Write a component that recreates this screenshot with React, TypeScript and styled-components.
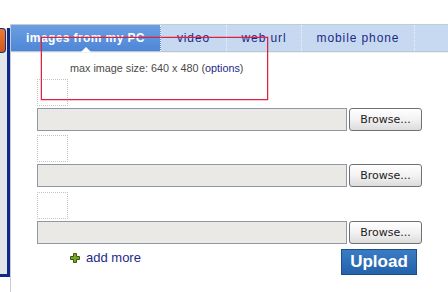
import React from "react";
import styled, { createGlobalStyle } from "styled-components";

const GlobalStyle = createGlobalStyle`
  html, body { margin: 0; padding: 0; background: #ffffff; }
  body { width: 448px; height: 292px; overflow: hidden; font-family: "Liberation Sans", Arial, sans-serif; }
`;

const Page = styled.div`
  display: flex;
  align-items: flex-start;
  width: 448px;
  height: 292px;
`;

const SidePanel = styled.div`
  display: flex;
  flex-direction: column;
  width: 7px;
  height: 246px;
  margin-top: 28px;
  background: #e1e6ea;
  border-right: 3px solid #0d2a86;
  border-bottom: 3px solid #0d2a86;
  box-shadow: 1px 0 0 #a8b6ea;
  flex-shrink: 0;
`;

const SideButton = styled.div`
  width: 6px;
  height: 23px;
  margin-left: -1px;
  background: linear-gradient(#f07a30, #d4561a);
  border: 1px solid #13307e;
  border-left: none;
  border-radius: 0 4px 4px 0;
`;

const Frame = styled.div`
  position: relative;
  flex: 1;
  margin-top: 24px;
  height: 268px;
  border-top: 1px solid #c3ccd6;
  border-left: 1px solid #c3ccd6;
`;

const TabBar = styled.div`
  display: flex;
  height: 26px;
  background: #c7d9f1;
  border-bottom: 1px solid #b9c6d4;
  box-shadow: 0 1px 0 #eef2f6;
`;

const Tab = styled.div<{ $w: number; $active?: boolean }>`
  position: relative;
  width: ${(p) => p.$w}px;
  display: flex;
  align-items: center;
  justify-content: center;
  font-size: 12px;
  letter-spacing: ${(p) => (p.$active ? "0.4px" : "0.9px")};
  font-weight: ${(p) => (p.$active ? "bold" : "normal")};
  color: ${(p) => (p.$active ? "#ffffff" : "#1c2a86")};
  background: ${(p) =>
    p.$active ? "linear-gradient(#6a9fe2, #4f86d6)" : "transparent"};
  border-right: 1px dotted #f0f4fa;
  box-sizing: border-box;
  white-space: nowrap;
`;

const Pointer = styled.span`
  position: absolute;
  left: 70px;
  bottom: -1px;
  width: 0;
  height: 0;
  border-left: 5px solid transparent;
  border-right: 5px solid transparent;
  border-bottom: 5px solid #ffffff;
`;

const Content = styled.div`
  display: flex;
  flex-direction: column;
  width: 385px;
  padding-left: 26px;
`;

const Info = styled.div`
  margin: 9px 0 0 33px;
  height: 14px;
  font-size: 10.8px;
  color: #4a4a4a;
  line-height: 14px;
`;

const InfoLink = styled.span`
  color: #1c2a86;
`;

const Thumb = styled.div<{ $top: number }>`
  width: 31px;
  height: 27px;
  margin-top: ${(p) => p.$top}px;
  border: 1px dotted #c4c4c4;
  box-sizing: border-box;
`;

const FileRow = styled.div`
  display: flex;
  align-items: center;
  gap: 2px;
  margin-top: 2px;
`;

const FileInput = styled.div`
  width: 310px;
  height: 23px;
  background: #ebe9e5;
  border: 1px solid #8d99a6;
  box-sizing: border-box;
`;

const Browse = styled.button`
  width: 73px;
  height: 23px;
  padding: 0;
  font-family: "DejaVu Sans", Verdana, sans-serif;
  font-size: 11px;
  color: #222;
  background: linear-gradient(#ffffff, #f2f2f2 50%, #dcdcdc);
  border: 1px solid #707070;
  border-radius: 3px;
  box-sizing: border-box;
`;

const Footer = styled.div`
  display: flex;
  align-items: flex-start;
  margin-top: 5px;
`;

const AddMore = styled.div`
  display: flex;
  align-items: center;
  gap: 6px;
  margin: 1px 0 0 33px;
  font-size: 13px;
  color: #1c2a86;
`;

const Upload = styled.button`
  margin-left: auto;
  margin-right: 5px;
  width: 76px;
  height: 26px;
  padding: 0;
  font-family: "Liberation Sans", Arial, sans-serif;
  font-size: 17px;
  font-weight: bold;
  color: #ffffff;
  background: linear-gradient(#3a7cc4, #2462aa);
  border: 1px solid #1c4f8c;
  box-sizing: border-box;
`;

const RedOutline = styled.div`
  position: absolute;
  left: 30px;
  top: 12px;
  width: 227px;
  height: 63px;
  border: 1px solid #e0203e;
  box-shadow: 0 0 0 0.5px rgba(210, 40, 60, 0.5);
  box-sizing: border-box;
  pointer-events: none;
`;

const PlusIcon = () => (
  <svg width="10" height="10" viewBox="0 0 10 10">
    <path
      d="M3.5 0.5h3v3h3v3h-3v3h-3v-3h-3v-3h3z"
      fill="#7aa526"
      stroke="#3b5a12"
      strokeWidth="1"
    />
  </svg>
);

const rows = [4, 4, 5];

export default function App() {
  return (
    <>
      <GlobalStyle />
      <Page>
        <SidePanel>
          <SideButton />
        </SidePanel>
        <Frame>
          <TabBar>
            <Tab $w={150} $active>
              images from my PC
              <Pointer />
            </Tab>
            <Tab $w={66}>video</Tab>
            <Tab $w={75}>web url</Tab>
            <Tab $w={113}>mobile phone</Tab>
          </TabBar>
          <Content>
            <Info>
              max image size: 640 x 480 (<InfoLink>options</InfoLink>)
            </Info>
            {rows.map((top, i) => (
              <React.Fragment key={i}>
                <Thumb $top={top} />
                <FileRow>
                  <FileInput />
                  <Browse>Browse...</Browse>
                </FileRow>
              </React.Fragment>
            ))}
            <Footer>
              <AddMore>
                <PlusIcon />
                add more
              </AddMore>
              <Upload>Upload</Upload>
            </Footer>
          </Content>
          <RedOutline />
        </Frame>
      </Page>
    </>
  );
}
